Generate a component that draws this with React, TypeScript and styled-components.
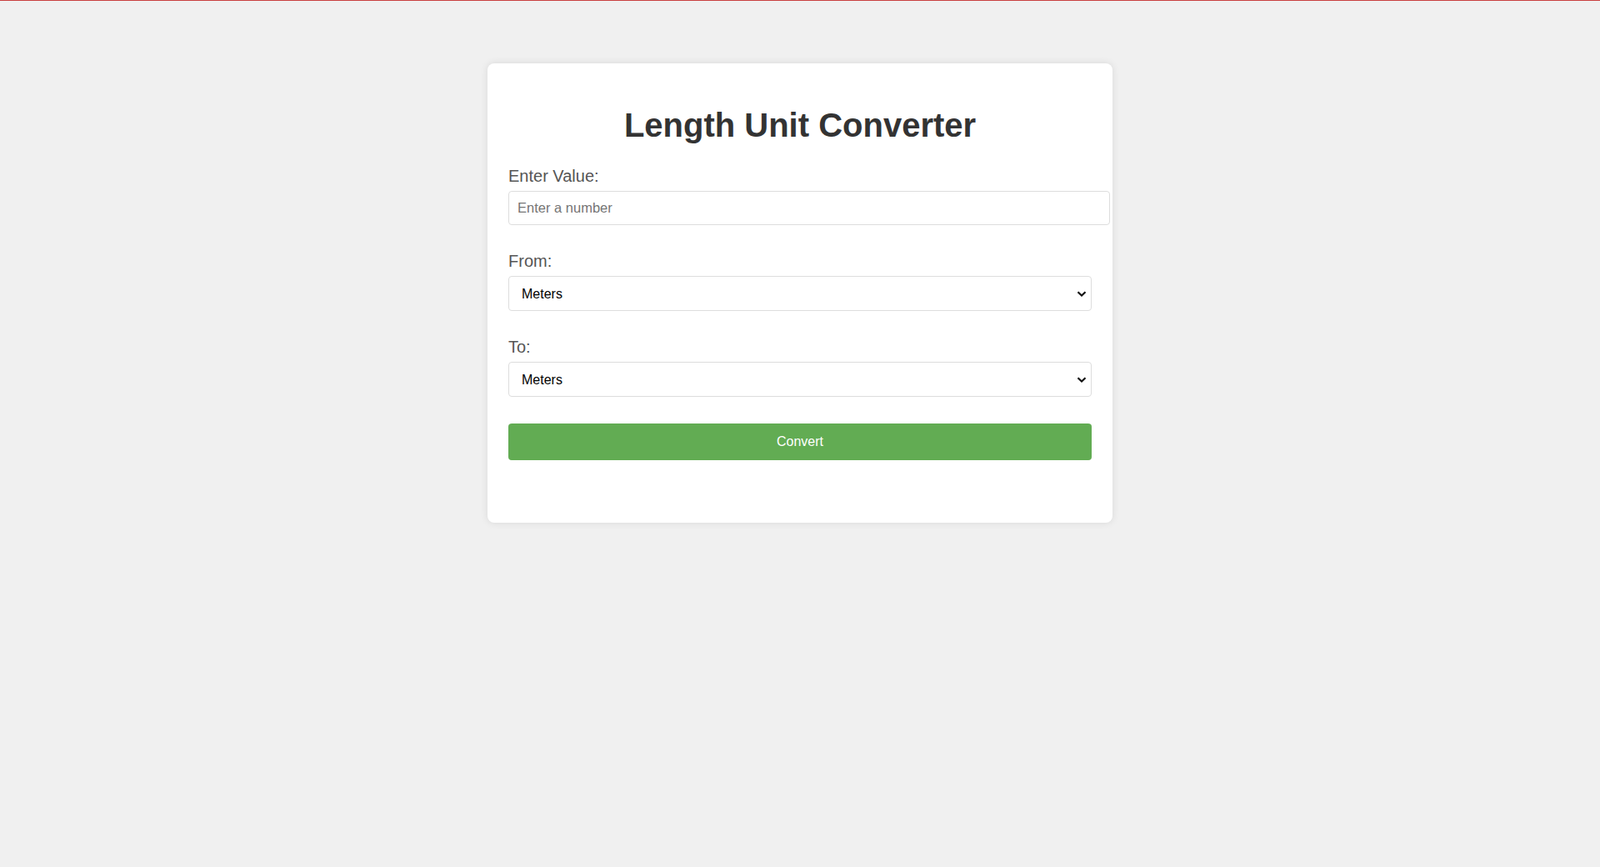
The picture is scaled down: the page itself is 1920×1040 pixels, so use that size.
import React, { useState } from "react";
import styled, { createGlobalStyle } from "styled-components";

const units = ["Meters", "Kilometers", "Centimeters", "Millimeters", "Miles", "Yards", "Feet", "Inches"];

const factors: Record<string, number> = {
  Meters: 1,
  Kilometers: 1000,
  Centimeters: 0.01,
  Millimeters: 0.001,
  Miles: 1609.344,
  Yards: 0.9144,
  Feet: 0.3048,
  Inches: 0.0254,
};

const GlobalStyle = createGlobalStyle`
  html, body {
    margin: 0;
    padding: 0;
  }

  body {
    background-color: #f0f0f0;
    border-top: 1px solid #c94040;
    font-family: "Liberation Sans", Arial, sans-serif;
    min-height: 1039px;
  }
`;

const PageContainer = styled.div`
  padding-top: 75px;
`;

const Card = styled.div`
  width: 700px;
  margin: 0 auto;
  padding: 25px;
  background-color: white;
  border-radius: 8px;
  box-shadow: 0 0 10px rgba(0, 0, 0, 0.1);
`;

const Title = styled.h1`
  margin: 27px 0;
  text-align: center;
  font-size: 40px;
  font-weight: bold;
  color: #333;
`;

const FormGroup = styled.div`
  margin-bottom: 32px;
`;

const Label = styled.label`
  display: block;
  margin-bottom: 7px;
  font-size: 20px;
  line-height: 22px;
  color: #555;
`;

const NumberInput = styled.input`
  display: block;
  width: 100%;
  height: 19px;
  padding: 10px;
  border: 1px solid #ddd;
  border-radius: 4px;
  font-family: "Liberation Sans", Arial, sans-serif;
  font-size: 16.5px;
  color: #333;

  &::placeholder {
    color: #757575;
  }
`;

const SelectWrap = styled.div`
  position: relative;
`;

const UnitSelect = styled.select`
  display: block;
  width: 100%;
  height: 42px;
  padding: 0 30px 0 15px;
  border: 1px solid #ddd;
  border-radius: 4px;
  background-color: white;
  appearance: none;
  -webkit-appearance: none;
  font-family: "Liberation Sans", Arial, sans-serif;
  font-size: 16px;
  color: #000;
`;

const Chevron = styled.svg`
  position: absolute;
  right: 6px;
  top: 18px;
  pointer-events: none;
`;

const ConvertButton = styled.button`
  display: block;
  width: 100%;
  height: 44px;
  padding: 0 20px;
  border: none;
  border-radius: 4px;
  background-color: #62ac53;
  color: white;
  font-family: "Liberation Sans", Arial, sans-serif;
  font-size: 16px;
  cursor: pointer;

  &:hover {
    background-color: #57a049;
  }
`;

const Result = styled.div`
  height: 50px;
  display: flex;
  align-items: center;
  justify-content: center;
  font-size: 18px;
  color: #333;
`;

function UnitPicker({ id, value, onChange }: { id: string; value: string; onChange: (v: string) => void }) {
  return (
    <SelectWrap>
      <UnitSelect id={id} value={value} onChange={(e) => onChange(e.target.value)}>
        {units.map((u) => (
          <option key={u} value={u}>
            {u}
          </option>
        ))}
      </UnitSelect>
      <Chevron width="12" height="7" viewBox="0 0 12 7">
        <path d="M1.5 1.2 L6 5.5 L10.5 1.2" fill="none" stroke="#111" strokeWidth="2.2" />
      </Chevron>
    </SelectWrap>
  );
}

function App() {
  const [value, setValue] = useState<string>("");
  const [from, setFrom] = useState<string>("Meters");
  const [to, setTo] = useState<string>("Meters");
  const [result, setResult] = useState<string>("");

  function handleConvert(): void {
    const num = parseFloat(value);
    if (isNaN(num)) {
      setResult("");
      return;
    }
    const converted = (num * factors[from]) / factors[to];
    setResult(`${num} ${from} = ${parseFloat(converted.toFixed(6))} ${to}`);
  }

  return (
    <>
      <GlobalStyle />
      <PageContainer>
        <Card>
          <Title>Length Unit Converter</Title>
          <FormGroup>
            <Label htmlFor="value">Enter Value:</Label>
            <NumberInput
              id="value"
              type="number"
              placeholder="Enter a number"
              value={value}
              onChange={(e) => setValue(e.target.value)}
            />
          </FormGroup>
          <FormGroup>
            <Label htmlFor="from">From:</Label>
            <UnitPicker id="from" value={from} onChange={setFrom} />
          </FormGroup>
          <FormGroup>
            <Label htmlFor="to">To:</Label>
            <UnitPicker id="to" value={to} onChange={setTo} />
          </FormGroup>
          <ConvertButton onClick={handleConvert}>Convert</ConvertButton>
          <Result>{result}</Result>
        </Card>
      </PageContainer>
    </>
  );
}

export default App;
